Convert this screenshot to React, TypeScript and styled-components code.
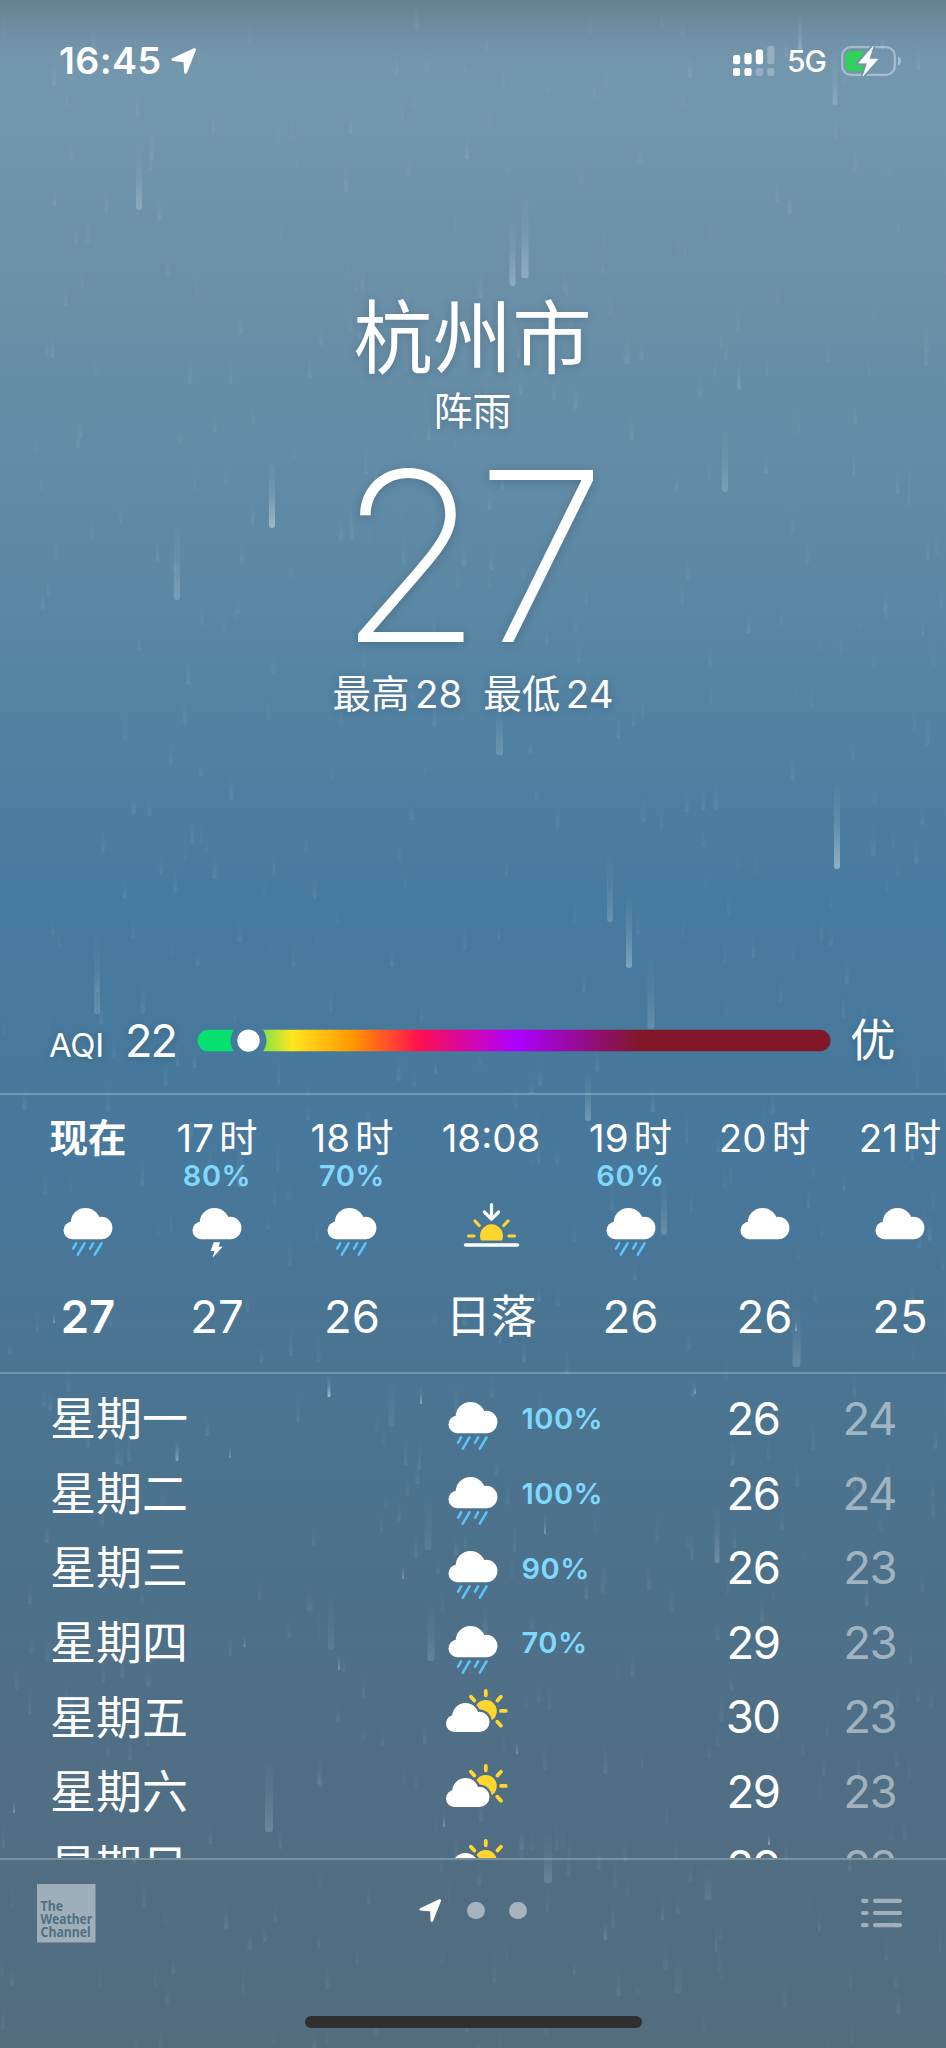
import React from "react";
import styled, { createGlobalStyle } from "styled-components";

const GlobalStyle = createGlobalStyle`
  *, *::before, *::after { box-sizing: border-box; }
  html, body { margin: 0; padding: 0; background: #526c80; }
`;

const line = "rgba(255, 255, 255, 0.24)";
const rainBlue = "#7fd9ff";
const dimmed = "rgba(255, 255, 255, 0.48)";

const Screen = styled.div`
  position: relative;
  width: 946px;
  height: 2048px;
  overflow: hidden;
  display: flex;
  flex-direction: column;
  color: #fff;
  font-family: Inter, "Noto Sans CJK SC", sans-serif;
  font-weight: 400;
  background: linear-gradient(
    180deg,
    #67828f 0px,
    #6a8695 10px,
    #6e8ca0 26px,
    #7193a9 44px,
    #7397ad 70px,
    #7195ab 140px,
    #6b8fa7 300px,
    #638ca6 440px,
    #5b88a4 600px,
    #5382a3 710px,
    #477a9f 900px,
    #47799c 1050px,
    #48779a 1200px,
    #4a7490 1371px,
    #4a7592 1376px,
    #4d718b 1560px,
    #506e84 1800px,
    #526d81 1960px,
    #546c7e 2048px
  );
`;

const RainLayer = styled.svg`
  position: absolute;
  inset: 0;
  width: 946px;
  height: 2048px;
  pointer-events: none;
`;

const StatusBar = styled.header`
  position: relative;
  flex: none;
  height: 121px;
  padding: 0 44px 0 59px;
  display: flex;
  align-items: center;
  justify-content: space-between;
`;

const StatusGroup = styled.div`
  display: flex;
  align-items: center;
`;

const Clock = styled.span`
  font-size: 37.5px;
  font-weight: 590;
  line-height: 40px;
  letter-spacing: 0.4px;
  margin-right: 9.5px;
`;

const Network = styled.span`
  font-size: 30px;
  font-weight: 450;
  line-height: 40px;
  margin: 1px 15px 0 12px;
  letter-spacing: -1px;
`;

const Hero = styled.section`
  position: relative;
  flex: none;
  height: 868px;
  padding-top: 169px;
  display: flex;
  flex-direction: column;
  align-items: center;
  text-shadow: 0 2px 8px rgba(20, 40, 60, 0.22);
`;

const City = styled.h1`
  margin: 0;
  font-size: 79.5px;
  font-weight: 400;
  line-height: 96px;
  padding-right: 1px;
`;

const Condition = styled.div`
  font-size: 39px;
  line-height: 50px;
  font-weight: 370;
  padding-right: 1px;
`;

const Temperature = styled.div`
  font-size: 236px;
  font-weight: 215;
  line-height: 240px;
  letter-spacing: -7px;
  padding-right: 9px;
`;

const HighLow = styled.div`
  display: flex;
  gap: 21px;
  font-size: 38.5px;
  font-weight: 380;
  line-height: 36px;
`;

const Pair = styled.span`
  display: flex;
  gap: 5.5px;
`;

const AirQuality = styled.section`
  position: relative;
  flex: none;
  height: 104px;
  display: flex;
  align-items: center;
  padding-left: 49px;
  text-shadow: 0 2px 6px rgba(20, 40, 60, 0.22);
`;

const AqiLabel = styled.span`
  width: 76px;
  font-size: 33px;
  font-weight: 390;
  line-height: 40px;
  padding-top: 8px;
  letter-spacing: -0.3px;
`;

const AqiValue = styled.span`
  width: 72px;
  font-size: 45px;
  line-height: 48px;
  letter-spacing: -2px;
`;

const AqiScale = styled.svg`
  display: block;
  width: 634px;
  height: 36px;
  margin-right: 19px;
`;

const AqiLevel = styled.span`
  font-size: 45.5px;
  line-height: 48px;
`;

const Hourly = styled.section`
  position: relative;
  flex: none;
  height: 279px;
  border-top: 2px solid ${line};
  padding: 18px 0 0 23.5px;
  display: grid;
  grid-template-columns: 129px 129px 141px 137px 142px 126px 145px;
`;

const Hour = styled.div<{ $now?: boolean }>`
  display: flex;
  flex-direction: column;
  align-items: center;
  font-weight: ${(p) => (p.$now ? 600 : 380)};
`;

const HourLabel = styled.div`
  display: flex;
  gap: 5px;
  font-size: 38.5px;
  line-height: 50px;
  white-space: nowrap;
`;

const Chance = styled.div`
  height: 25px;
  font-size: 29px;
  font-weight: 600;
  line-height: 25px;
  letter-spacing: 0.5px;
  color: ${rainBlue};
`;

const HourIcon = styled.div`
  height: 60px;
  margin: 7px 0 31.5px;
`;

const HourTemp = styled.div`
  font-size: 45.5px;
  line-height: 60px;
  white-space: nowrap;
`;

const Daily = styled.section`
  position: relative;
  flex: none;
  height: 486px;
  overflow: hidden;
  border-top: 2px solid ${line};
  padding: 7.7px 50px 0 50px;
`;

const Day = styled.div`
  height: 74.6px;
  display: grid;
  grid-template-columns: 393px 78.5px 1fr 116.5px 116.5px;
  align-items: center;
  font-size: 46px;
  font-weight: 380;
  line-height: 60px;
`;

const DayName = styled.span`
  padding-bottom: 1.5px;
`;

const Degrees = styled.span<{ $low?: boolean }>`
  text-align: right;
  font-size: 45.5px;
  letter-spacing: -1.5px;
  color: ${(p) => (p.$low ? dimmed : "#fff")};
`;

const IconSvg = styled.svg`
  display: block;
  overflow: visible;
`;

const Footer = styled.footer`
  position: relative;
  flex: 1;
  border-top: 2px solid ${line};
  display: flex;
  flex-direction: column;
  align-items: center;
`;

const Toolbar = styled.nav`
  width: 100%;
  height: 156px;
  padding: 23.5px 36.5px 0;
  display: grid;
  grid-template-columns: 1fr auto 1fr;
  align-items: start;
`;

const Pages = styled.div`
  display: flex;
  align-items: center;
  gap: 24.5px;
  padding-top: 15.5px;
`;

const PageDot = styled.i`
  width: 17.8px;
  height: 17.8px;
  border-radius: 50%;
  background: ${dimmed};
`;

const ListButton = styled.button`
  justify-self: end;
  padding: 0;
  margin: 14px 6.5px 0 0;
  border: 0;
  background: none;
`;

const HomeIndicator = styled.div`
  width: 337px;
  height: 12px;
  border-radius: 6px;
  background: #2f2f2f;
`;

/* x, top, bottom, width, opacity of the near drops */
const nearDrops: number[][] = [
  [139, 145, 210, 6, 0.28], [512.5, 215, 286, 6, 0.32], [525, 195, 278, 7, 0.34],
  [272, 460, 528, 6, 0.5], [177, 520, 600, 6, 0.25], [725, 425, 492, 6, 0.22],
  [837, 780, 869, 6, 0.5], [610, 850, 922, 6, 0.22], [629, 890, 968, 6, 0.38],
  [97, 930, 1014, 6, 0.2], [499.5, 700, 755, 7, 0.2], [651, 950, 1029, 7, 0.2],
  [588, 1070, 1121, 6, 0.3], [664, 1175, 1235, 6, 0.22], [796.5, 1300, 1367, 8, 0.2],
  [835, 50, 105, 5, 0.25], [800, 10, 50, 4, 0.25], [717, 1505, 1563, 5, 0.25],
  [431, 1600, 1661, 7, 0.16], [269, 1755, 1832, 8, 0.2], [548, 1830, 1883, 8, 0.18],
  [428, 1490, 1550, 7, 0.1], [331, 1590, 1650, 6, 0.1], [240, 1140, 1187, 6, 0.16],
  [391.5, 1375, 1427, 6, 0.1], [708, 1860, 1900, 7, 0.1], [678, 1950, 1993, 7, 0.06],
  [329, 1375, 1397, 3, 0.6], [177, 1440, 1461, 3, 0.45], [230, 1445, 1458, 2, 0.3],
  [421, 1388, 1404, 2, 0.5], [695, 1385, 1394, 2, 0.4], [769, 1835, 1845, 2, 0.5],
  [545, 1515, 1534, 2, 0.35], [517, 1740, 1754, 2, 0.3], [444, 1812, 1827, 2, 0.3],
  [403, 1565, 1579, 2, 0.35], [339, 1655, 1670, 2, 0.35], [244.5, 1635, 1647, 2, 0.3],
  [54, 1315, 1323, 1.5, 0.5], [796, 1320, 1331, 2, 0.45], [14, 1800, 1813, 2, 0.3],
];

const farDrops: number[][] = (() => {
  let seed = 4271;
  const next = () => {
    seed = (seed * 16807) % 2147483647;
    return seed / 2147483647;
  };
  return Array.from({ length: 620 }, () => {
    const x = next() * 946;
    const y = next() * 2048;
    return [x, y, y + 16 + next() * 18, 2.6 + next() * 1.8, 0.03 + next() * 0.08];
  });
})();

const Rain = () => (
  <RainLayer viewBox="0 0 946 2048" aria-hidden>
    <defs>
      <linearGradient id="drop" x1="0" y1="0" x2="0" y2="1">
        <stop offset="0" stopColor="#d6e6ee" stopOpacity="0" />
        <stop offset="0.5" stopColor="#d6e6ee" stopOpacity="0.3" />
        <stop offset="1" stopColor="#d6e6ee" />
      </linearGradient>
    </defs>
    {[...farDrops, ...nearDrops].map(([x, top, bottom, w, o], i) => (
      <rect key={i} x={x - w / 2} y={top} width={w} height={bottom - top} rx={w / 2.5} fill="url(#drop)" opacity={o} />
    ))}
  </RainLayer>
);

const LocationArrow = ({ size }: { size: number }) => (
  <IconSvg width={size} height={size} viewBox="0 0 25 25">
    <path
      d="M1.8 11.2 22.6 1.6 14 23.4 13.4 12.2Z"
      fill="#fff"
      stroke="#fff"
      strokeWidth="2.8"
      strokeLinejoin="round"
    />
  </IconSvg>
);

const Signal = () => {
  const tops = [9, 7, 3.5, 0];
  return (
    <IconSvg width="42" height="30" viewBox="0 0 42 30" fill="#fff">
      {tops.map((top, i) => (
        <React.Fragment key={i}>
          <rect x={i * 11.4} y={top} width="7.2" height={18.2 - top} rx="2.2" opacity={i < 3 ? 1 : 0.25} />
          <rect x={i * 11.4} y="22" width="7.2" height="8" rx="2.2" opacity={i < 2 ? 1 : 0.25} />
        </React.Fragment>
      ))}
    </IconSvg>
  );
};

const boltPath = "M32 0.5 17.8 17h8.6l-4.2 12.8L36.8 13.2h-8.8z";

const Battery = () => (
  <IconSvg width="61" height="30" viewBox="0 0 61 30">
    <mask id="boltGap">
      <rect width="61" height="30" fill="#fff" />
      <path d={boltPath} fill="#000" stroke="#000" strokeWidth="4.5" />
    </mask>
    <g mask="url(#boltGap)">
      <rect x="1.2" y="1.2" width="52.6" height="27.6" rx="8.5" fill="none" stroke="#fff" strokeOpacity="0.38" strokeWidth="2.2" />
      <path d="M9 5h13.5v20H9a4.5 4.5 0 0 1-4.5-4.5v-11A4.5 4.5 0 0 1 9 5Z" fill="#30d158" />
    </g>
    <path d="M57 10.5c4 1.8 4 7.2 0 9z" fill="#fff" opacity="0.4" />
    <path d={boltPath} fill="#fff" stroke="#fff" strokeWidth="0.8" strokeLinejoin="round" />
  </IconSvg>
);

const CloudShape = () => (
  <g fill="#fff">
    <circle cx="8.8" cy="22.4" r="8.8" />
    <circle cx="22" cy="14.8" r="14.8" />
    <circle cx="37.7" cy="20" r="11.2" />
    <path d="M8.8 31.2h28.9V12H12z" />
  </g>
);

type IconKind = "rain" | "storm" | "cloud" | "sunset" | "partly";

const WeatherIcon = ({ kind }: { kind: IconKind }) => {
  if (kind === "sunset") {
    return (
      <IconSvg width="60" height="60" viewBox="0 0 60 60" fill="none" strokeLinecap="round" strokeLinejoin="round">
        <path d="M30.5 9.500v14M23.300 17l7.200 7.200 7.200-7.200" stroke="#fff" strokeWidth="3.2" />
        <path d="M20 45.500a11.500 11.500 0 1 1 21 0z" fill="#ffd52e" />
        <path d="M7.500 41h5.500M48 41h5.500M14 26l4.200 4.500M47 26l-4.200 4.500" stroke="#ffd52e" strokeWidth="3.2" />
        <path d="M4.500 50h52" stroke="#fff" strokeWidth="3.5" />
      </IconSvg>
    );
  }
  if (kind === "partly") {
    const cloud = (
      <>
        <circle cx="8.4" cy="36" r="8.4" />
        <circle cx="19.5" cy="28.8" r="13.3" />
        <circle cx="33.4" cy="34.3" r="10.1" />
        <path d="M8.400 44.400h25V28H11z" />
      </>
    );
    return (
      <IconSvg width="60" height="60" viewBox="0 0 60 60">
        <g transform="translate(3 0.5)">
          <mask id="sunGap" maskUnits="userSpaceOnUse" x="0" y="0" width="66" height="60">
            <rect width="66" height="60" fill="#fff" />
            <g fill="#000" stroke="#000" strokeWidth="4.6">{cloud}</g>
          </mask>
          <g mask="url(#sunGap)">
            <circle cx="39.7" cy="23.5" r="11.1" fill="#ffd52e" />
          </g>
          <path
            d="M39.800 3.500v4.300M55 23.400h4.800M51.500 13l3.400-3.800M28.300 13l-3.400-3.800M51.300 34.200l3.600 3.900"
            stroke="#ffd52e"
            strokeWidth="3.8"
            strokeLinecap="round"
          />
          <g fill="#fff">{cloud}</g>
        </g>
      </IconSvg>
    );
  }
  return (
    <IconSvg width="60" height="60" viewBox="0 0 60 60">
      <g transform="translate(5.5 13)">
        <CloudShape />
        {kind === "rain" && (
          <path
            d="M12.600 35.400l-3 5.200M21 35.400l-6.700 11.300M29.600 35.400l-3 5.200M38 35.400l-6.700 11.300"
            stroke="#5ac4fa"
            strokeWidth="2.6"
            strokeLinecap="round"
          />
        )}
        {kind === "storm" && <path d="M21.300 34.300h6.200l-1.500 4.400h4.200L20 49.700l2-6.700h-4z" fill="#fff" />}
      </g>
    </IconSvg>
  );
};

const ProviderLogo = () => (
  <IconSvg width="59" height="59" viewBox="0 0 59 59">
    <rect width="58.5" height="58.5" fill="#9fafba" />
    <g fill="#526f84" fontFamily="'Noto Sans', 'Open Sans', sans-serif" fontWeight="700" fontSize="15">
      <text x="3.6" y="26.5" textLength="22.5" lengthAdjust="spacingAndGlyphs">The</text>
      <text x="3.6" y="39.6" textLength="51.5" lengthAdjust="spacingAndGlyphs">Weather</text>
      <text x="3.6" y="53.3" textLength="50" lengthAdjust="spacingAndGlyphs">Channel</text>
    </g>
  </IconSvg>
);

const ListIcon = () => (
  <IconSvg width="42" height="30" viewBox="0 0 42 30" fill="#a0afba">
    {[0.7, 12.9, 25.1].map((y) => (
      <React.Fragment key={y}>
        <rect x="0" y={y} width="7.6" height="4.2" rx="2.1" />
        <rect x="12" y={y} width="29" height="4.2" rx="1.8" />
      </React.Fragment>
    ))}
  </IconSvg>
);

const AqiBar = () => (
  <AqiScale viewBox="0 0 634 36">
    <defs>
      <linearGradient id="aqi" gradientUnits="userSpaceOnUse" x1="0" y1="0" x2="634" y2="0">
        <stop offset="0" stopColor="#05e070" />
        <stop offset="0.058" stopColor="#05e070" />
        <stop offset="0.15" stopColor="#ffe61f" />
        <stop offset="0.247" stopColor="#ff9500" />
        <stop offset="0.35" stopColor="#ff1050" />
        <stop offset="0.505" stopColor="#ab00ff" />
        <stop offset="0.695" stopColor="#82172a" />
        <stop offset="1" stopColor="#82172a" />
      </linearGradient>
      <mask id="knobGap">
        <rect width="634" height="36" fill="#fff" />
        <circle cx="51.5" cy="17.6" r="18" fill="#000" />
      </mask>
    </defs>
    <rect x="0.5" y="6.8" width="633" height="21.5" rx="10.75" fill="url(#aqi)" mask="url(#knobGap)" />
    <circle cx="51.5" cy="17.6" r="11.2" fill="#fff" />
  </AqiScale>
);

type HourData = { label: string[]; chance?: string; icon: IconKind; value: string; now?: boolean };

const hours: HourData[] = [
  { label: ["现在"], icon: "rain", value: "27", now: true },
  { label: ["17", "时"], chance: "80%", icon: "storm", value: "27" },
  { label: ["18", "时"], chance: "70%", icon: "rain", value: "26" },
  { label: ["18:08"], icon: "sunset", value: "日落" },
  { label: ["19", "时"], chance: "60%", icon: "rain", value: "26" },
  { label: ["20", "时"], icon: "cloud", value: "26" },
  { label: ["21", "时"], icon: "cloud", value: "25" },
];

type DayData = { name: string; icon: IconKind; chance?: string; high: number; low: number };

const days: DayData[] = [
  { name: "星期一", icon: "rain", chance: "100%", high: 26, low: 24 },
  { name: "星期二", icon: "rain", chance: "100%", high: 26, low: 24 },
  { name: "星期三", icon: "rain", chance: "90%", high: 26, low: 23 },
  { name: "星期四", icon: "rain", chance: "70%", high: 29, low: 23 },
  { name: "星期五", icon: "partly", high: 30, low: 23 },
  { name: "星期六", icon: "partly", high: 29, low: 23 },
  { name: "星期日", icon: "partly", high: 29, low: 23 },
];

export default function App() {
  return (
    <Screen>
      <GlobalStyle />
      <Rain />
      <StatusBar>
        <StatusGroup>
          <Clock>16:45</Clock>
          <LocationArrow size={26} />
        </StatusGroup>
        <StatusGroup>
          <Signal />
          <Network>5G</Network>
          <Battery />
        </StatusGroup>
      </StatusBar>

      <Hero>
        <City>杭州市</City>
        <Condition>阵雨</Condition>
        <Temperature>27</Temperature>
        <HighLow>
          <Pair><span>最高</span><span>28</span></Pair>
          <Pair><span>最低</span><span>24</span></Pair>
        </HighLow>
      </Hero>

      <AirQuality>
        <AqiLabel>AQI</AqiLabel>
        <AqiValue>22</AqiValue>
        <AqiBar />
        <AqiLevel>优</AqiLevel>
      </AirQuality>

      <Hourly>
        {hours.map((h, i) => (
          <Hour key={i} $now={h.now}>
            <HourLabel>{h.label.map((part) => <span key={part}>{part}</span>)}</HourLabel>
            <Chance>{h.chance}</Chance>
            <HourIcon><WeatherIcon kind={h.icon} /></HourIcon>
            <HourTemp>{h.value}</HourTemp>
          </Hour>
        ))}
      </Hourly>

      <Daily>
        {days.map((d) => (
          <Day key={d.name}>
            <DayName>{d.name}</DayName>
            <WeatherIcon kind={d.icon} />
            <Chance>{d.chance}</Chance>
            <Degrees>{d.high}</Degrees>
            <Degrees $low>{d.low}</Degrees>
          </Day>
        ))}
      </Daily>

      <Footer>
        <Toolbar>
          <ProviderLogo />
          <Pages>
            <LocationArrow size={23} />
            <PageDot />
            <PageDot />
          </Pages>
          <ListButton aria-label="城市列表"><ListIcon /></ListButton>
        </Toolbar>
        <HomeIndicator />
      </Footer>
    </Screen>
  );
}
